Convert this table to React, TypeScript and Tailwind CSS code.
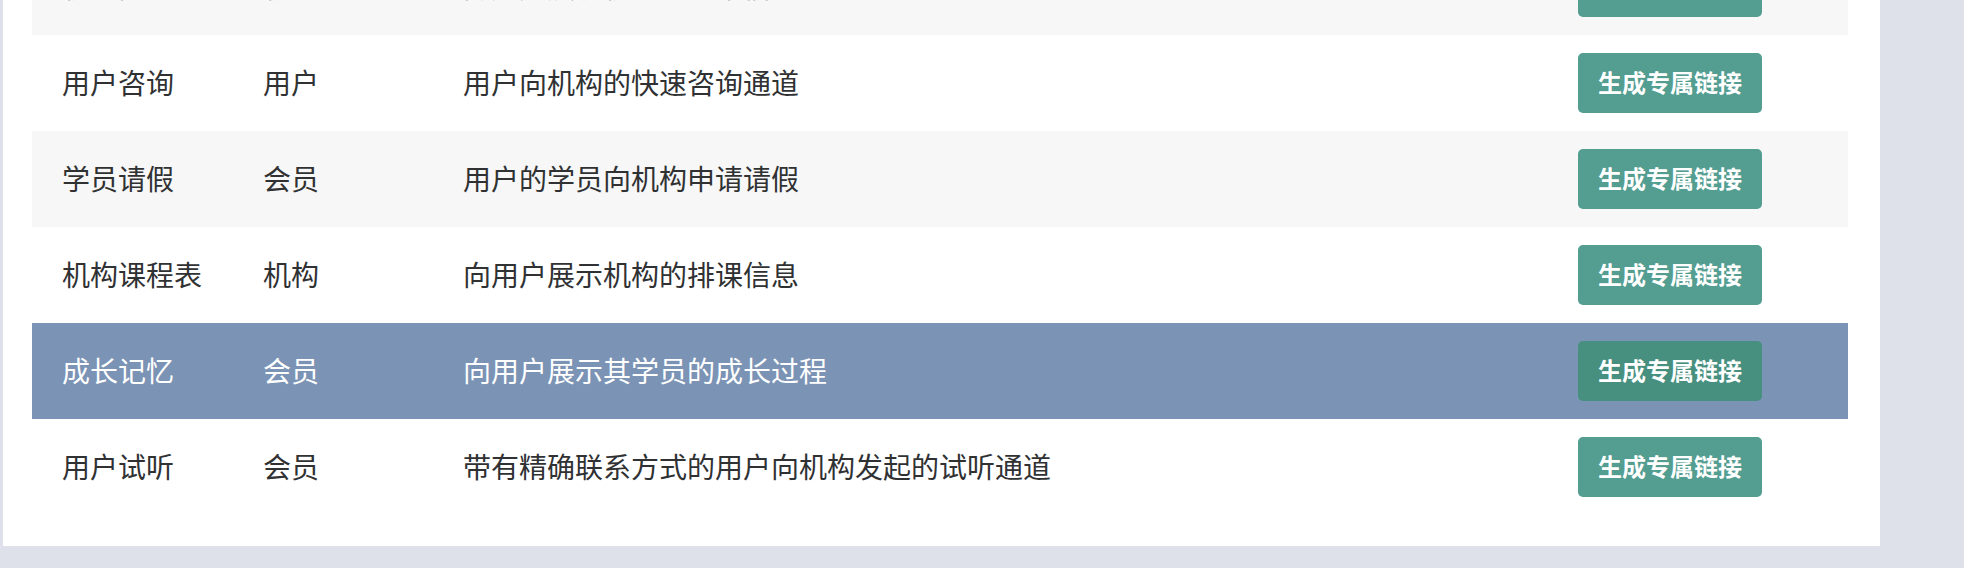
type Row = {
  name: string;
  role: string;
  desc: string;
};

const rows: Row[] = [
  { name: "机构简介", role: "机构", desc: "向用户展示机构的基本信息" },
  { name: "用户咨询", role: "用户", desc: "用户向机构的快速咨询通道" },
  { name: "学员请假", role: "会员", desc: "用户的学员向机构申请请假" },
  { name: "机构课程表", role: "机构", desc: "向用户展示机构的排课信息" },
  { name: "成长记忆", role: "会员", desc: "向用户展示其学员的成长过程" },
  { name: "用户试听", role: "会员", desc: "带有精确联系方式的用户向机构发起的试听通道" },
];

const activeIndex = 4;

function App() {
  return (
    <div className="h-[568px] w-[1964px] overflow-hidden bg-[#dee1ea] font-['Noto_Sans_CJK_SC','Noto_Sans',sans-serif] text-[28px] text-[#303133]">
      <div className="-mt-[61px] ml-[3px] w-[1877px] bg-white pb-[31px] pl-[29px] pr-[32px]">
        {/* link table */}
        <div className="flex flex-col">
          {rows.map((row, i) => {
            const active = i === activeIndex;
            return (
              <div
                key={row.name}
                className={
                  "grid h-[96px] grid-cols-[200px_200px_1116px_300px] items-center " +
                  (active
                    ? "bg-[#7b93b4] text-white"
                    : i % 2 === 0
                      ? "bg-[#f7f7f7]"
                      : "bg-white")
                }
              >
                <div className="pb-[2px] pl-[30px] leading-none">{row.name}</div>
                <div className="pb-[2px] pl-[31px] leading-none">{row.role}</div>
                <div className="pb-[2px] pl-[31px] leading-none">{row.desc}</div>
                <div className="pl-[30px]">
                  <button
                    className={
                      "flex h-[60px] w-[184px] items-center justify-center rounded-[5px] pb-[2px] text-[24px] font-bold text-white " +
                      (active ? "bg-[#47907f]" : "bg-[#539d91]")
                    }
                  >
                    生成专属链接
                  </button>
                </div>
              </div>
            );
          })}
        </div>
      </div>
    </div>
  );
}

export default App;
